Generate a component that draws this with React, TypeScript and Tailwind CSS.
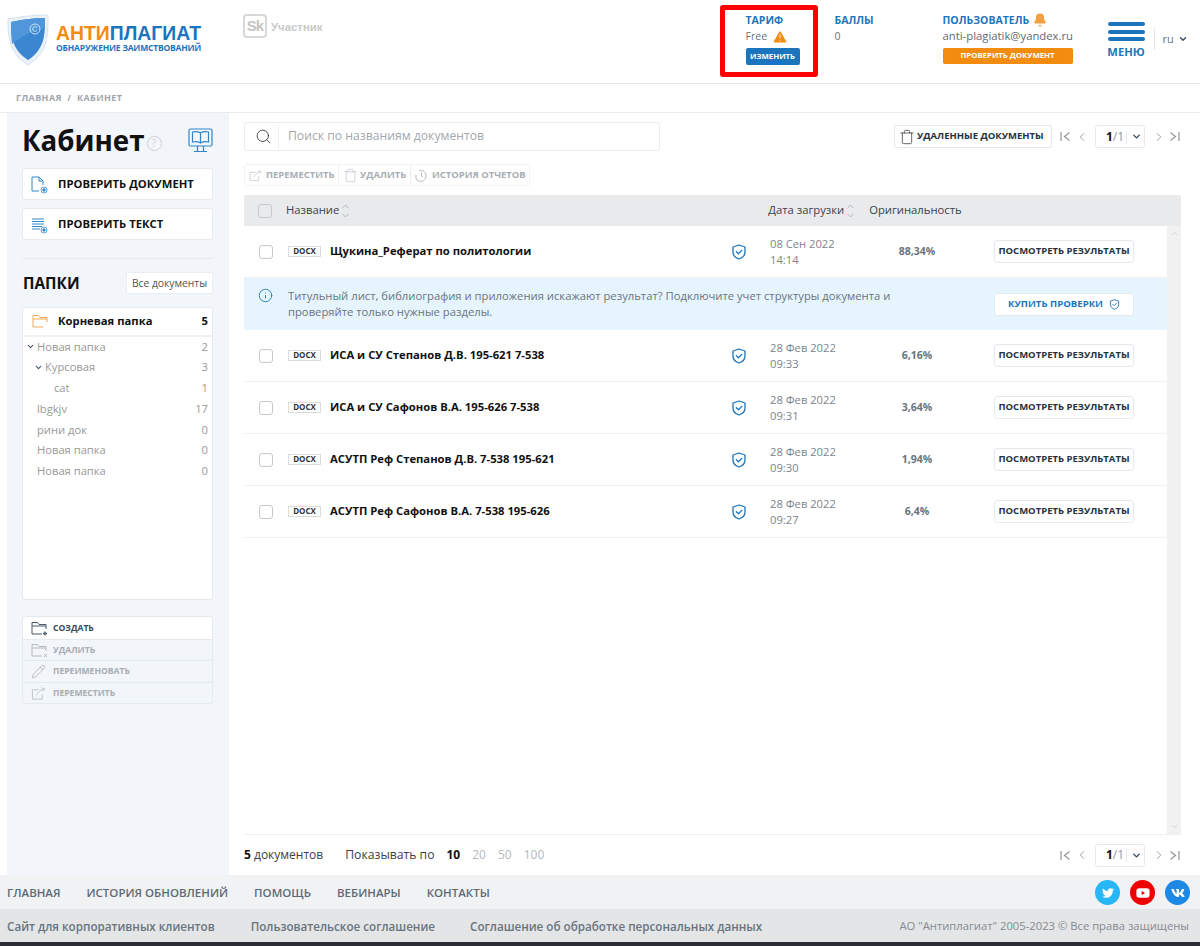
import React from 'react';
import { FaTwitter, FaYoutube, FaVk } from 'react-icons/fa';
import { ChevronDown, ChevronUp, ChevronLeft, ChevronRight, Search, Trash, TriangleAlert, Bell, Info, Pencil } from 'lucide-react';

const SANS = { fontFamily: '"Open Sans", "Noto Sans", sans-serif' };

const ShieldCheck = ({ size = 16, color = '#1c75bc' }: { size?: number; color?: string }) => (
  <svg width={size} height={size} viewBox="0 0 16 16" fill="none" stroke={color}>
    <path d="M8 1 L14 3 V8 C14 11.5 11 14 8 15 C5 14 2 11.5 2 8 V3 Z" strokeWidth="1.3" strokeLinejoin="round" />
    <path d="M5.4 7.8 L7.4 9.8 L10.8 6.4" strokeWidth="1.3" strokeLinecap="round" strokeLinejoin="round" />
  </svg>
);

const Logo = () => (
  <svg width="42" height="52" viewBox="0 0 42 52" className="shrink-0">
    <path d="M1 5 C12 3 26 1 41 1 C41 20 42 38 21 51 C2 40 1 22 1 5 Z" fill="#eaf2f8" stroke="#d5e3ee" />
    <path d="M4 8 C14 6 26 4 38 4 C38 20 38 35 21 46 C5 36 4 22 4 8 Z" fill="#3a86d0" />
    <path d="M4 8 C14 6 26 4 38 4 L38 14 C24 17 12 24 5 30 C4 22 4 15 4 8 Z" fill="#4f97da" />
    <circle cx="28" cy="15" r="5" fill="none" stroke="#cfe3f5" strokeWidth="1" />
    <path d="M30 13.5 A2.4 2.4 0 1 0 30 16.5" fill="none" stroke="#cfe3f5" strokeWidth="1" />
  </svg>
);

const FolderIcon = ({ color, extra }: { color: string; extra?: string }) => (
  <svg width="19" height="15" viewBox="0 0 19 15" fill="none" stroke={color} strokeWidth="1">
    <path d="M1 13 V1.5 H6.5 L8 3.5 H15 V8 M1 5 H15 M1 13 H11" />
    {extra === 'plus' && <path d="M14 10.5 V14.5 M12 12.5 H16" strokeWidth="1.3" />}
    {extra === 'x' && <path d="M13 11 L16 14 M16 11 L13 14" />}
  </svg>
);

const MoveIcon = ({ color = '#bcc4cc', size = 16 }: { color?: string; size?: number }) => (
  <svg width={size} height={size} viewBox="0 0 16 16" fill="none" stroke={color} strokeWidth="1">
    <path d="M8 4 H1.5 V14 H12 V9 M6 10 C7 7 9 5 14 3 M11 2 L14.5 3 L13 6" />
  </svg>
);

const Sort = () => (
  <span className="ml-[1px] flex flex-col -space-y-[2px] text-[#8f959b]">
    <ChevronUp size={11} strokeWidth={1.4} />
    <ChevronDown size={11} strokeWidth={1.4} />
  </span>
);

const Pager = () => (
  <div className="flex shrink-0 items-center text-[#8f969d]">
    <svg width="11" height="11" viewBox="0 0 11 11" fill="none" stroke="#8f969d" strokeWidth="1.2"><path d="M1 1 V10 M9.5 1.5 L4.5 5.5 L9.5 9.5" /></svg>
    <ChevronLeft size={14} strokeWidth={1.5} className="ml-[4px]" />
    <div className="ml-[6px] flex h-[23px] w-[50px] items-center rounded-[3px] border border-[#e3eaf0] bg-white text-[12px]">
      <span className="ml-[8px] w-[22px] text-center"><b className="text-[#111]">1</b>/1</span>
      <span className="h-[14px] w-px bg-[#eceff2]" />
      <ChevronDown size={11} strokeWidth={3} className="ml-[4px] text-[#33475b]" />
    </div>
    <ChevronRight size={14} strokeWidth={1.5} className="ml-[7px]" />
    <svg width="11" height="11" viewBox="0 0 11 11" fill="none" stroke="#8f969d" strokeWidth="1.2" className="ml-[3px]"><path d="M10 1 V10 M1.5 1.5 L6.5 5.5 L1.5 9.5" /></svg>
  </div>
);

const Checkbox = ({ clear }: { clear?: boolean }) => (
  <span className={`block h-[14px] w-[14px] rounded-[3px] border border-[#c9c9c9] ${clear ? '' : 'bg-white'}`} />
);

const docs = [
  { name: 'ИСА и СУ Степанов Д.В. 195-621 7-538', date: '28 Фев 2022', time: '09:33', pct: '6,16%' },
  { name: 'ИСА и СУ Сафонов В.А. 195-626 7-538', date: '28 Фев 2022', time: '09:31', pct: '3,64%' },
  { name: 'АСУТП Реф Степанов Д.В. 7-538 195-621', date: '28 Фев 2022', time: '09:30', pct: '1,94%' },
  { name: 'АСУТП Реф Сафонов В.А. 7-538 195-626', date: '28 Фев 2022', time: '09:27', pct: '6,4%' },
];

const DocRow = ({ name, date, time, pct }: { name: string; date: string; time: string; pct: string }) => (
  <div className="flex h-[52px] items-center border-b border-[#eff1f3]">
    <div className="ml-[15px] w-[29px]"><Checkbox /></div>
    <span className="mb-[1px] flex h-[11px] w-[33px] items-center justify-center border border-[#dcdcdc] text-[8px] font-bold text-[#333]">DOCX</span>
    <span className="ml-[9px] w-[401px] text-[11.25px] font-bold text-[#111]">{name}</span>
    <ShieldCheck />
    <div className="ml-[23px] w-[110px] text-[11.2px] leading-[16px] text-[#7b858e]">{date}<br />{time}</div>
    <span className="w-[74px] text-center text-[10.5px] font-bold text-[#69747e]">{pct}</span>
    <button className="ml-[40px] h-[23px] w-[140px] whitespace-nowrap rounded-[3px] border border-[#e3eaf0] bg-white text-[9.5px] font-bold text-[#27323c]">ПОСМОТРЕТЬ РЕЗУЛЬТАТЫ</button>
  </div>
);

const tree = [
  { t: 'Новая папка', n: 2, pad: 'pl-[14px]', arrow: 'left-[3px]' },
  { t: 'Курсовая', n: 3, pad: 'pl-[22px]', arrow: 'left-[11px]' },
  { t: 'cat', n: 1, pad: 'pl-[31px]' },
  { t: 'lbgkjv', n: 17, pad: 'pl-[14px]' },
  { t: 'рини док', n: 0, pad: 'pl-[14px]' },
  { t: 'Новая папка', n: 0, pad: 'pl-[14px]' },
  { t: 'Новая папка', n: 0, pad: 'pl-[14px]' },
];

export default function App() {
  return (
    <div className="relative h-[946px] w-[1200px] overflow-hidden bg-white" style={SANS}>
      {/* header */}
      <header className="flex h-[84px] border-b border-[#e6e8ea]">
        <div className="ml-[7px] mt-[14px]"><Logo /></div>
        <div className="ml-[7px] mt-[23px] w-[187px]">
          <div className="text-[19.4px] font-semibold leading-[20px]" style={{ fontFamily: '"Liberation Sans", sans-serif' }}>
            <span className="text-[#f28c0e]">АНТИ</span><span className="text-[#1c75bc]">ПЛАГИАТ</span>
          </div>
          <div className="text-[8.5px] font-bold leading-[9px] tracking-[-0.2px] text-[#1c75bc]">ОБНАРУЖЕНИЕ ЗАИМСТВОВАНИЙ</div>
        </div>
        <div className="mt-[14px] flex h-[24px] items-center" style={{ fontFamily: '"Liberation Sans", sans-serif' }}>
          <span className="flex h-[24px] w-[24px] items-center justify-center rounded-[4px] border-2 border-[#d8d8d8] text-[15px] font-bold tracking-[-1px] text-[#c4c4c4]">Sk</span>
          <span className="ml-[4px] mt-[3px] text-[11.4px] font-bold text-[#c9c9c9]">Участник</span>
        </div>
        <div className="ml-[423px] mt-[13px] w-[89px]">
          <div className="text-[10.5px] font-bold leading-[14px] text-[#1c75bc]">ТАРИФ</div>
          <div className="mt-[2px] flex h-[16px] items-center text-[10.5px] text-[#69747e]">Free<TriangleAlert size={16} fill="#f28c0e" stroke="#fff" strokeWidth={1.5} className="ml-[5px]" /></div>
          <div className="mt-[3px] flex h-[17px] w-[54px] items-center justify-center rounded-[2px] bg-[#1c75bc] text-[7.8px] font-bold text-white">ИЗМЕНИТЬ</div>
        </div>
        <div className="mt-[13px] w-[108px]">
          <div className="text-[10.5px] font-bold leading-[14px] text-[#1c75bc]">БАЛЛЫ</div>
          <div className="mt-[2px] flex h-[16px] items-center text-[10.5px] text-[#69747e]">0</div>
        </div>
        <div className="mt-[13px] w-[165px]">
          <div className="flex items-center text-[10.5px] font-bold leading-[14px] text-[#1c75bc]">ПОЛЬЗОВАТЕЛЬ<Bell size={14} fill="#f0a040" stroke="#f0a040" className="ml-[4px]" /></div>
          <div className="mt-[1px] flex h-[17px] items-center text-[11.3px] text-[#5f6a74]">anti-plagiatik@yandex.ru</div>
          <div className="mt-[3px] flex h-[16px] w-[130px] items-center justify-center rounded-[2px] bg-[#f28c0e] text-[7.8px] font-bold text-white">ПРОВЕРИТЬ ДОКУМЕНТ</div>
        </div>
        <div className="mt-[22px] flex w-[37px] flex-col items-center">
          <span className="h-[4px] w-[37px] rounded-full bg-[#1c75bc]" />
          <span className="mt-[3.5px] h-[4px] w-[37px] rounded-full bg-[#1c75bc]" />
          <span className="mt-[3.5px] h-[4px] w-[37px] rounded-full bg-[#1c75bc]" />
          <span className="mt-[3px] text-[11.2px] font-bold leading-[15px] text-[#1c75bc]">МЕНЮ</span>
        </div>
        <div className="ml-[9px] mt-[28px] flex h-[22px] items-center border-l border-[#e3e5e7] pl-[8px] text-[11px] text-[#69747e]">
          ru<ChevronDown size={10} strokeWidth={3} className="ml-[4px] text-[#33475b]" />
        </div>
      </header>

      {/* breadcrumb */}
      <div className="flex h-[29px] items-center border-b border-[#e9ecef] pl-[16px] text-[9px] font-bold tracking-[0.4px] text-[#a0a6ac]">
        ГЛАВНАЯ&nbsp;&nbsp;/&nbsp;&nbsp;КАБИНЕТ
      </div>

      <div className="flex h-[762px]">
        {/* sidebar */}
        <aside className="ml-[7px] w-[222px] bg-[#f2f5f9] pl-[15px] pr-[16px]">
          <div className="flex h-[55px] items-center">
            <h1 className="text-[27.7px] font-bold leading-none text-[#111]">Кабинет</h1>
            <span className="ml-[2px] mt-[5px] flex h-[15px] w-[15px] items-center justify-center rounded-full border border-[#ccd0d4] text-[10px] text-[#ccd0d4]">?</span>
            <svg width="25" height="25" viewBox="0 0 25 25" fill="none" stroke="#2f87c9" strokeWidth="1.2" className="ml-auto">
              <rect x="1" y="1" width="23" height="17" rx="1.5" />
              <path d="M12.5 5 C10 3.5 7 3.5 4.5 4 V14 C7 13.5 10 13.5 12.5 15 C15 13.5 18 13.5 20.5 14 V4 C18 3.5 15 3.5 12.5 5 Z M12.5 5 V15 M9.5 18 V23 M15.5 18 V23 M6 23.5 H19" />
            </svg>
          </div>
          <button className="flex h-[32px] w-full items-center whitespace-nowrap rounded-[3px] border border-[#e6ebf0] bg-white pt-[1px] text-[11.25px] font-bold text-[#111]">
            <svg width="17" height="18" viewBox="0 0 17 18" fill="none" stroke="#2f87c9" strokeWidth="1" className="ml-[8px] mr-[10px]">
              <path d="M8 15 H1 V1 H8 L12 5 V9 M8 1 V5 H12" /><circle cx="13" cy="14" r="3" strokeWidth=".8" /><circle cx="13" cy="14" r="1.2" fill="#2f87c9" />
            </svg>
            ПРОВЕРИТЬ ДОКУМЕНТ
          </button>
          <button className="mt-[8px] flex h-[32px] w-full items-center whitespace-nowrap rounded-[3px] border border-[#e6ebf0] bg-white pt-[1px] text-[11.25px] font-bold text-[#111]">
            <svg width="17" height="18" viewBox="0 0 17 18" fill="none" stroke="#2f87c9" strokeWidth="1" className="ml-[8px] mr-[10px]">
              <path d="M1 3 H13 M1 5.5 H13 M1 8 H13 M1 10.5 H11 M1 13 H9" /><circle cx="13" cy="14" r="3" strokeWidth=".8" /><circle cx="13" cy="14" r="1.2" fill="#2f87c9" />
            </svg>
            ПРОВЕРИТЬ ТЕКСТ
          </button>
          <div className="mt-[18px] border-t border-[#e6ebf0]" />
          <div className="mt-[13px] flex items-center justify-between">
            <span className="ml-[1px] pt-[1px] text-[15.4px] font-bold leading-[21px] text-[#111]">ПАПКИ</span>
            <button className="flex h-[22px] w-[87px] items-center justify-center whitespace-nowrap rounded-[2px] border border-[#eaeef2] bg-white pt-[1px] text-[10.3px] text-[#555]">Все документы</button>
          </div>
          <div className="mt-[13px] h-[293px] rounded-[3px] border border-[#e3eaf0] bg-white">
            <div className="flex h-[28.5px] items-center border-b-2 border-[#eef2f6] pr-[4px]">
              <span className="ml-[9px] mr-[7px]"><FolderIcon color="#f5a85a" /></span>
              <span className="text-[11.25px] font-bold text-[#111]">Корневая папка</span>
              <span className="ml-auto text-[11.25px] font-bold text-[#111]">5</span>
            </div>
            {tree.map((r, i) => (
              <div key={i} className={`relative flex h-[20.8px] items-center pr-[4px] text-[11.2px] text-[#999] ${r.pad}`}>
                {r.arrow && <ChevronDown size={9} strokeWidth={3} className={`absolute ${r.arrow} text-[#46596b]`} />}
                {r.t}<span className="ml-auto">{r.n}</span>
              </div>
            ))}
          </div>
          <div className="mt-[16px] rounded-[3px] border border-[#e3eaf0] text-[8.6px] font-bold">
            <div className="flex h-[22px] items-center rounded-t-[3px] bg-white text-[#3a4a58]"><span className="ml-[8px] w-[22px]"><FolderIcon color="#4a5a68" extra="plus" /></span>СОЗДАТЬ</div>
            <div className="flex h-[21px] items-center border-t border-[#e3eaf0] text-[#a8aeb4]"><span className="ml-[8px] w-[22px]"><FolderIcon color="#b4bac0" extra="x" /></span>УДАЛИТЬ</div>
            <div className="flex h-[22px] items-center border-t border-[#e3eaf0] text-[#a8aeb4]"><span className="ml-[8px] w-[22px]"><Pencil size={15} strokeWidth={1} color="#9aa1a8" /></span>ПЕРЕИМЕНОВАТЬ</div>
            <div className="flex h-[21px] items-center border-t border-[#e3eaf0] text-[#a8aeb4]"><span className="ml-[8px] w-[22px]"><MoveIcon size={15} /></span>ПЕРЕМЕСТИТЬ</div>
          </div>
        </aside>

        {/* content */}
        <main className="ml-[15px] flex w-[937px] flex-col">
          <div className="mt-[9px] flex h-[29px] items-center">
            <div className="flex h-[29px] w-[416px] shrink-0 items-center rounded-[3px] border border-[#e6edf3]">
              <Search size={17} strokeWidth={1.2} className="ml-[10px] text-[#333]" />
              <span className="ml-[6px] h-[24px] w-px bg-[#eceff2]" />
              <span className="ml-[9px] text-[12.2px] text-[#a2a7ac]">Поиск по названиям документов</span>
            </div>
            <button className="ml-[234px] flex h-[23px] w-[158px] shrink-0 items-center whitespace-nowrap rounded-[2px] border border-[#e3eaf0] text-[9.5px] font-bold text-[#27323c]">
              <Trash size={16} strokeWidth={1.1} className="ml-[4px] mr-[2px] text-[#333]" />УДАЛЕННЫЕ ДОКУМЕНТЫ
            </button>
            <div className="ml-[8px]"><Pager /></div>
          </div>
          <div className="mt-[13px] flex h-[22px] w-[286px] items-center whitespace-nowrap rounded-[3px] border border-[#f1f3f5] text-[9.45px] font-bold text-[#a8aeb4]">
            <div className="flex h-full w-[94px] shrink-0 items-center border-r border-[#eceff2] pl-[4px]"><MoveIcon color="#c2c8ce" size={13} /><span className="ml-[4px]">ПЕРЕМЕСТИТЬ</span></div>
            <div className="flex h-full w-[72px] shrink-0 items-center border-r border-[#eceff2] pl-[4px]"><Trash size={15} strokeWidth={1} className="text-[#b4bac0]" /><span className="ml-[2px]">УДАЛИТЬ</span></div>
            <div className="flex h-full items-center pl-[4px]">
              <svg width="13" height="13" viewBox="0 0 13 13" fill="none" stroke="#b4bac0" strokeWidth="1"><path d="M4 1.5 A5.5 5.5 0 1 1 2 11 M6.5 3.5 V7 L8 8 M1 6 A5 5 0 0 0 2 11" /></svg>
              <span className="ml-[4px]">ИСТОРИЯ ОТЧЕТОВ</span>
            </div>
          </div>

          <div className="mt-[9px] flex h-[31px] items-center rounded-t-[2px] bg-[#e9eaec] text-[11.25px] text-[#3a424a]">
            <div className="ml-[14px] w-[28px]"><Checkbox clear /></div>
            <span>Название</span><Sort />
            <span className="ml-[417px]">Дата загрузки</span><Sort />
            <span className="ml-[13px]">Оригинальность</span>
          </div>

          <div className="relative h-[609px] border-b border-[#eceff2]">
            <div className="w-[923px]">
              <DocRow name="Щукина_Реферат по политологии" date="08 Сен 2022" time="14:14" pct="88,34%" />
              <div className="flex h-[52px] items-center bg-[#e6f5fd]">
                <Info size={15} strokeWidth={1.4} className="mb-[17px] ml-[14px] text-[#1c75bc]" />
                <p className="mb-[1px] ml-[15px] w-[640px] text-[11.25px] leading-[16px] text-[#69747e]">Титульный лист, библиография и приложения искажают результат? Подключите учет структуры документа и<br />проверяйте только нужные разделы.</p>
                <button className="ml-[66px] flex h-[23px] w-[140px] items-center justify-center whitespace-nowrap rounded-[3px] border border-[#e3eaf0] bg-white text-[9.6px] font-bold text-[#1c75bc]">
                  КУПИТЬ ПРОВЕРКИ<span className="ml-[6px]"><ShieldCheck size={11} /></span>
                </button>
              </div>
              {docs.map((d) => <DocRow key={d.name} {...d} />)}
            </div>
            <div className="absolute right-0 top-0 flex h-full w-[14px] flex-col items-center justify-between bg-[#f1f1f1] py-[3px] text-[#c4c4c4]">
              <ChevronUp size={9} strokeWidth={2} />
              <ChevronDown size={9} strokeWidth={2} />
            </div>
          </div>

          <div className="flex h-[40px] items-center pr-[1px] text-[12px] text-[#3a424a]">
            <span><b className="text-[#111]">5</b> документов</span>
            <span className="ml-[22px] text-[12.2px]">Показывать по</span>
            <b className="ml-[12px] text-[#111]">10</b>
            <span className="ml-[12px] text-[#b4b9be]">20</span>
            <span className="ml-[12px] text-[#b4b9be]">50</span>
            <span className="ml-[12px] text-[#b4b9be]">100</span>
            <div className="ml-auto"><Pager /></div>
          </div>
        </main>
      </div>

      {/* footer */}
      <footer>
        <div className="flex h-[34px] items-center bg-[#f1f2f4] pl-[7px] pr-[10px] pt-[1px] text-[11.5px] font-semibold text-[#5c6a78]">
          <span>ГЛАВНАЯ</span>
          <span className="ml-[26px]">ИСТОРИЯ ОБНОВЛЕНИЙ</span>
          <span className="ml-[26px]">ПОМОЩЬ</span>
          <span className="ml-[26px]">ВЕБИНАРЫ</span>
          <span className="ml-[26px]">КОНТАКТЫ</span>
          <span className="ml-auto flex h-[25px] w-[25px] items-center justify-center rounded-full bg-[#29b6f6] text-white"><FaTwitter size={12} /></span>
          <span className="ml-[10px] flex h-[25px] w-[25px] items-center justify-center rounded-full bg-[#f00000] text-white"><FaYoutube size={14} /></span>
          <span className="ml-[10px] flex h-[25px] w-[25px] items-center justify-center rounded-full bg-[#1e88e5] text-white"><FaVk size={14} /></span>
        </div>
        <div className="flex h-[33px] items-center bg-[#e4e5e7] pl-[7px] pr-[11px] pt-[2px] text-[11.65px] text-[#69747e]">
          <span className="font-semibold">Сайт для корпоративных клиентов</span>
          <span className="ml-[36px] font-semibold">Пользовательское соглашение</span>
          <span className="ml-[35px] font-semibold">Соглашение об обработке персональных данных</span>
          <span className="ml-auto text-[11.25px] text-[#858b91]">АО "Антиплагиат" 2005-2023 © Все права защищены</span>
        </div>
        <div className="h-[4px] bg-[#2a2d33]" />
      </footer>

      {/* annotation frame */}
      <div className="absolute left-[720px] top-[5px] h-[72px] w-[98px] rounded-[3px] border-[5px] border-[#ff0000]" />
    </div>
  );
}
